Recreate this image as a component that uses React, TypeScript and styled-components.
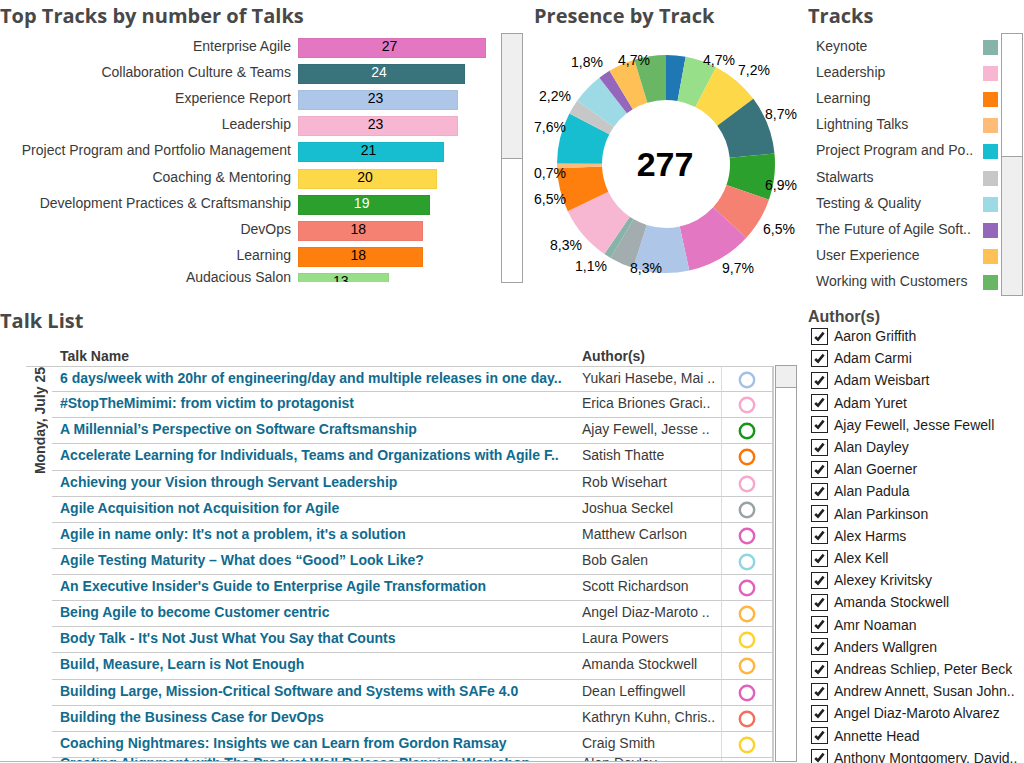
import React from "react";
import styled, { createGlobalStyle } from "styled-components";

const GlobalStyle = createGlobalStyle`
  *, *::before, *::after { box-sizing: border-box; }
  body {
    margin: 0;
    background: #fff;
    color: #3a3a3a;
    font: 14px/20px "Liberation Sans", Arial, sans-serif;
    overflow: hidden;
  }
`;

const tracks = [
  { name: "Agile Foundations", talks: 8, color: "#1f77b4" },
  { name: "Audacious Salon", talks: 13, color: "#98df8a" },
  { name: "Coaching & Mentoring", talks: 20, color: "#fdd848" },
  { name: "Collaboration Culture & Teams", talks: 24, color: "#39737c" },
  { name: "Development Practices & Craftsmanship", talks: 19, color: "#2ca02c" },
  { name: "DevOps", talks: 18, color: "#f58173" },
  { name: "Enterprise Agile", talks: 27, color: "#e377c2" },
  { name: "Experience Report", talks: 23, color: "#aec7e8" },
  { name: "Government", talks: 10, color: "#a3acaf" },
  { name: "Keynote", talks: 3, color: "#86b4a9" },
  { name: "Leadership", talks: 23, color: "#f7b6d2" },
  { name: "Learning", talks: 18, color: "#ff7f0e" },
  { name: "Lightning Talks", talks: 2, color: "#ffbb78" },
  { name: "Project Program and Po..", talks: 21, color: "#17becf" },
  { name: "Stalwarts", talks: 6, color: "#c7c7c7" },
  { name: "Testing & Quality", talks: 13, color: "#9edae5" },
  { name: "The Future of Agile Soft..", talks: 5, color: "#9467bd" },
  { name: "User Experience", talks: 11, color: "#ffc156" },
  { name: "Working with Customers", talks: 13, color: "#69b764" },
];

const bars = [
  { name: "Enterprise Agile", talks: 27, color: "#e377c2" },
  { name: "Collaboration Culture & Teams", talks: 24, color: "#39737c", light: true },
  { name: "Experience Report", talks: 23, color: "#aec7e8" },
  { name: "Leadership", talks: 23, color: "#f7b6d2" },
  { name: "Project Program and Portfolio Management", talks: 21, color: "#17becf" },
  { name: "Coaching & Mentoring", talks: 20, color: "#fdd848" },
  { name: "Development Practices & Craftsmanship", talks: 19, color: "#2ca02c", light: true },
  { name: "DevOps", talks: 18, color: "#f58173" },
  { name: "Learning", talks: 18, color: "#ff7f0e" },
  { name: "Audacious Salon", talks: 13, color: "#98df8a" },
];

const shares: [string, number, number][] = [
  ["4,7%", 185, 28],
  ["7,2%", 220, 38],
  ["8,7%", 247, 82],
  ["6,9%", 247, 153],
  ["6,5%", 245, 197],
  ["9,7%", 204, 236],
  ["8,3%", 112, 236],
  ["1,1%", 57, 234],
  ["8,3%", 32, 213],
  ["6,5%", 16, 167],
  ["0,7%", 16, 141],
  ["7,6%", 16, 95],
  ["2,2%", 21, 64],
  ["1,8%", 53, 30],
  ["4,7%", 100, 28],
];

const talks: [string, string, string][] = [
  ["6 days/week with 20hr of engineering/day and multiple releases in one day..", "Yukari Hasebe, Mai ..", "#a5c0e6"],
  ["#StopTheMimimi: from victim to protagonist", "Erica Briones Graci..", "#f7a8cb"],
  ["A Millennial’s Perspective on Software Craftsmanship", "Ajay Fewell, Jesse ..", "#159615"],
  ["Accelerate Learning for Individuals, Teams and Organizations with Agile F..", "Satish Thatte", "#ff7303"],
  ["Achieving your Vision through Servant Leadership", "Rob Wisehart", "#f7a8cb"],
  ["Agile Acquisition not Acquisition for Agile", "Joshua Seckel", "#98a2a5"],
  ["Agile in name only: It's not a problem, it's a solution", "Matthew Carlson", "#e062bb"],
  ["Agile Testing Maturity – What does “Good” Look Like?", "Bob Galen", "#90d5e2"],
  ["An Executive Insider's Guide to Enterprise Agile Transformation", "Scott Richardson", "#e062bb"],
  ["Being Agile to become Customer centric", "Angel Diaz-Maroto ..", "#ffb640"],
  ["Body Talk - It's Not Just What You Say that Counts", "Laura Powers", "#fdd22e"],
  ["Build, Measure, Learn is Not Enough", "Amanda Stockwell", "#ffb640"],
  ["Building Large, Mission-Critical Software and Systems with SAFe 4.0", "Dean Leffingwell", "#e062bb"],
  ["Building the Business Case for DevOps", "Kathryn Kuhn, Chris..", "#f46e5e"],
  ["Coaching Nightmares: Insights we can Learn from Gordon Ramsay", "Craig Smith", "#fdd22e"],
  ["Creating Alignment with The Product Wall Release Planning Workshop", "Alan Dayley", "#e062bb"],
];

const authors = [
  "Aaron Griffith",
  "Adam Carmi",
  "Adam Weisbart",
  "Adam Yuret",
  "Ajay Fewell, Jesse Fewell",
  "Alan Dayley",
  "Alan Goerner",
  "Alan Padula",
  "Alan Parkinson",
  "Alex Harms",
  "Alex Kell",
  "Alexey Krivitsky",
  "Amanda Stockwell",
  "Amr Noaman",
  "Anders Wallgren",
  "Andreas Schliep, Peter Beck",
  "Andrew Annett, Susan John..",
  "Angel Diaz-Maroto Alvarez",
  "Annette Head",
  "Anthony Montgomery, David..",
];

const Dashboard = styled.main`
  display: grid;
  grid-template-columns: minmax(0, 1fr) 216px;
  height: 100vh;
  overflow: hidden;
`;

const MainColumn = styled.div`
  display: flex;
  flex-direction: column;
  min-height: 0;
`;

const Charts = styled.div`
  display: grid;
  grid-template-columns: minmax(0, 1fr) 274px;
  height: 305px;
`;

const SideColumn = styled.aside`
  display: flex;
  flex-direction: column;
  min-height: 0;
`;

const Panel = styled.section`
  display: flex;
  flex-direction: column;
  flex: none;
  min-width: 0;
  min-height: 0;
`;

const Title = styled.h2`
  margin: 0;
  padding-top: 3px;
  height: 33px;
  flex: none;
  color: #484848;
  font: 700 20px/26px "Trebuchet MS", "Open Sans", sans-serif;
  white-space: nowrap;
`;

const ScrollTrack = styled.div<{ $end?: boolean }>`
  display: flex;
  flex-direction: column;
  justify-content: ${(p) => (p.$end ? "flex-end" : "flex-start")};
  flex: none;
  width: 22px;
  border: 1px solid #a2a2a2;
  background: #fff;
`;

const ScrollThumb = styled.div<{ $size: string; $end?: boolean }>`
  height: ${(p) => p.$size};
  background: #efefef;
  border: 0 solid #a2a2a2;
  border-width: ${(p) => (p.$end ? "1px 0 0" : "0 0 1px")};
`;

const BarArea = styled.div`
  display: flex;
  height: 250px;
  padding-right: 11px;
`;

const BarList = styled.ul`
  display: flex;
  flex-direction: column;
  justify-content: space-between;
  flex: 1;
  min-width: 0;
  margin: 0;
  padding: 4px 15px 0 0;
  list-style: none;
  overflow: hidden;
  border-bottom: 1px solid #fff;
`;

const BarLabel = styled.span`
  line-height: 18px;
`;

const BarRow = styled.li`
  display: grid;
  grid-template-columns: 291px minmax(0, 1fr);
  column-gap: 7px;
  flex: none;
  height: 26px;
  text-align: right;
  white-space: nowrap;

  &:last-child { height: 10px; }
  &:last-child ${BarLabel} { line-height: 10px; }
`;

const Bar = styled.div<{ $color: string; $light?: boolean }>`
  height: 20px;
  margin-top: 1px;
  padding-right: 5px;
  line-height: 16px;
  text-align: center;
  background: ${(p) => p.$color};
  color: ${(p) => (p.$light ? "#fff" : "#000")};
  box-shadow: inset 0 0 0 1px rgba(0, 0, 0, 0.04);
`;

const Donut = styled.svg`
  display: block;
  width: 274px;
  height: 260px;
  font-size: 14px;
  text-anchor: middle;
  fill: #000;
`;

const DonutTotal = styled.text`
  font-size: 34px;
  font-weight: 700;
`;

const TrackArea = styled.div`
  display: flex;
  height: 263px;
  padding-right: 1px;
`;

const TrackList = styled.ul`
  display: flex;
  flex-direction: column;
  justify-content: space-between;
  flex: 1;
  min-width: 0;
  margin: 0;
  padding: 0 3px 2px 8px;
  list-style: none;
`;

const TrackItem = styled.li`
  display: flex;
  align-items: center;
  justify-content: space-between;
  height: 26px;
  white-space: nowrap;
`;

const Swatch = styled.span<{ $color: string }>`
  width: 15px;
  height: 15px;
  margin-top: 3px;
  background: ${(p) => p.$color};
`;

const TalkPanel = styled(Panel)`
  flex: 1;
  padding-right: 11px;
`;

const TalkArea = styled.div`
  display: flex;
  flex: 1;
  min-height: 0;
  margin-bottom: 1px;
`;

const TalkViewport = styled.div`
  flex: 1;
  min-width: 0;
  overflow: hidden;
  border-bottom: 1px solid #b8b8b8;
  margin-right: 1px;
`;

const TalkTable = styled.table`
  width: 100%;
  height: 446px;
  table-layout: fixed;
  border-collapse: separate;
  border-spacing: 0;
  white-space: nowrap;
`;

const HeadCell = styled.th`
  height: 28px;
  padding: 8px 0 0 8px;
  text-align: left;
  line-height: 18px;
`;

const AuthorHead = styled(HeadCell)`
  padding-left: 1px;
`;

const DayCell = styled.th`
  padding: 0 0 0 26px;
  vertical-align: top;

  & > div { border-top: 1px solid #cbcbcb; }
  & span {
    display: block;
    width: 28px;
    writing-mode: vertical-rl;
    transform: rotate(180deg);
    line-height: 28px;
  }
`;

const Cell = styled.td`
  height: 26px;
  padding: 0 0 0 8px;
  line-height: 22px;
  vertical-align: top;
  border-bottom: 1px solid #cbcbcb;
  overflow: hidden;

  tr:first-child > & { border-top: 1px solid #cbcbcb; }
  tr:last-child > & { line-height: 10px; }
`;

const AuthorCell = styled(Cell)`
  padding-left: 1px;
`;

const RingCell = styled(Cell)`
  padding: 4px 0 0 16px;
  border-left: 1px solid #dcdcdc;
  border-right: 2px solid #cbcbcb;
`;

const Ring = styled.svg`
  display: block;
  width: 18px;
  height: 18px;
`;

const TalkLink = styled.a`
  color: #0f6b8f;
  font-weight: 700;
  text-decoration: none;
`;

const TalkScroll = styled(ScrollTrack)`
  margin-top: 27px;
`;

const FilterTitle = styled.h3`
  margin: 0;
  padding-top: 12px;
  flex: none;
  color: #484848;
  font-size: 16px;
  line-height: 18px;
`;

const AuthorList = styled.ul`
  display: flex;
  flex-direction: column;
  justify-content: space-between;
  flex: none;
  height: 442px;
  margin: 0;
  padding: 0 0 0 3px;
  list-style: none;
`;

const AuthorOption = styled.label`
  display: flex;
  align-items: center;
  gap: 6px;
  height: 20px;
  color: #1c1c1c;
  white-space: nowrap;
`;

const CheckWrap = styled.span`
  display: grid;
  width: 17px;
  height: 17px;

  & > * { grid-area: 1 / 1; }
  & > svg { place-self: center; pointer-events: none; }
  & > input:not(:checked) + svg { visibility: hidden; }
`;

const CheckInput = styled.input`
  appearance: none;
  width: 17px;
  height: 17px;
  margin: 0;
  border: 1px solid #222;
  background: #fff;
`;

const total = tracks.reduce((sum, t) => sum + t.talks, 0);

function slicePath(from: number, to: number) {
  const at = (n: number, r: number) => {
    const a = (n / total) * Math.PI * 2;
    return `${(132 + r * Math.sin(a)).toFixed(2)} ${(131 - r * Math.cos(a)).toFixed(2)}`;
  };
  return `M${at(from, 109)}A109 109 0 0 1 ${at(to, 109)}L${at(to, 64)}A64 64 0 0 0 ${at(from, 64)}Z`;
}

const slices = tracks.map((t, i) => {
  const from = tracks.slice(0, i).reduce((sum, s) => sum + s.talks, 0);
  return { color: t.color, name: t.name, d: slicePath(from, from + t.talks) };
});

export default function App() {
  return (
    <Dashboard>
      <GlobalStyle />
      <MainColumn>
        <Charts>
          <Panel>
            <Title>Top Tracks by number of Talks</Title>
            <BarArea>
              <BarList>
                {bars.map((b) => (
                  <BarRow key={b.name}>
                    <BarLabel>{b.name}</BarLabel>
                    <Bar $color={b.color} $light={b.light} style={{ width: `${(b.talks / 27) * 100}%` }}>
                      {b.talks}
                    </Bar>
                  </BarRow>
                ))}
              </BarList>
              <ScrollTrack>
                <ScrollThumb $size="125px" />
              </ScrollTrack>
            </BarArea>
          </Panel>
          <Panel>
            <Title>Presence by Track</Title>
            <Donut viewBox="0 0 274 260" role="img" aria-label="Presence by track">
              {slices.map((s) => (
                <path key={s.name} d={s.d} fill={s.color} />
              ))}
              {shares.map(([label, x, y], i) => (
                <text key={i} x={x} y={y + 4}>
                  {label}
                </text>
              ))}
              <DonutTotal x="131" y="143">
                {total}
              </DonutTotal>
            </Donut>
          </Panel>
        </Charts>
        <TalkPanel>
          <Title>Talk List</Title>
          <TalkArea>
            <TalkViewport>
              <TalkTable>
                <colgroup>
                  <col style={{ width: 52 }} />
                  <col />
                  <col style={{ width: 140 }} />
                  <col style={{ width: 53 }} />
                </colgroup>
                <thead>
                  <tr>
                    <HeadCell />
                    <HeadCell scope="col">Talk Name</HeadCell>
                    <AuthorHead scope="col">Author(s)</AuthorHead>
                    <HeadCell />
                  </tr>
                </thead>
                <tbody>
                  {talks.map(([name, author, color], i) => (
                    <tr key={name}>
                      {i === 0 && (
                        <DayCell rowSpan={talks.length} scope="rowgroup">
                          <div>
                            <span>Monday, July 25</span>
                          </div>
                        </DayCell>
                      )}
                      <Cell>
                        <TalkLink href="#">{name}</TalkLink>
                      </Cell>
                      <AuthorCell>{author}</AuthorCell>
                      <RingCell>
                        <Ring viewBox="0 0 18 18" aria-hidden="true">
                          <circle cx="9" cy="9" r="7.2" fill="none" stroke={color} strokeWidth="2.4" />
                        </Ring>
                      </RingCell>
                    </tr>
                  ))}
                </tbody>
              </TalkTable>
            </TalkViewport>
            <TalkScroll>
              <ScrollThumb $size="22px" />
            </TalkScroll>
          </TalkArea>
        </TalkPanel>
      </MainColumn>
      <SideColumn>
        <Panel>
          <Title>Tracks</Title>
          <TrackArea>
            <TrackList>
              {tracks.slice(9).map((t) => (
                <TrackItem key={t.name}>
                  {t.name}
                  <Swatch $color={t.color} />
                </TrackItem>
              ))}
            </TrackList>
            <ScrollTrack $end>
              <ScrollThumb $size="139px" $end />
            </ScrollTrack>
          </TrackArea>
        </Panel>
        <FilterTitle>Author(s)</FilterTitle>
        <AuthorList>
          {authors.map((a) => (
            <li key={a}>
              <AuthorOption>
                <CheckWrap>
                  <CheckInput type="checkbox" defaultChecked />
                  <svg width="11" height="11" viewBox="0 0 11 11" fill="none" stroke="#222" strokeWidth="2.6">
                    <path d="M1.2 6L4 8.6L9.6 1.6" />
                  </svg>
                </CheckWrap>
                {a}
              </AuthorOption>
            </li>
          ))}
        </AuthorList>
      </SideColumn>
    </Dashboard>
  );
}
